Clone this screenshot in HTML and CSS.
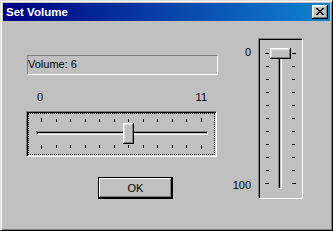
FILE: index.html
```html
<!DOCTYPE html>
<html lang="en">
<head>
  <meta charset="UTF-8" />
  <title>Set Volume</title>
  <link rel="stylesheet" href="styles.css">
</head>
<body>

  <div class="window">
    <div class="titlebar">
      <span class="title">Set Volume</span>
      <button class="close-btn" type="button" aria-label="Close">
        <svg width="8" height="7" viewBox="0 0 8 7">
          <path fill="#000" d="M0 0h2v1H0zM6 0h2v1H6zM1 1h2v1H1zM5 1h2v1H5zM2 2h4v1H2zM3 3h2v1H3zM2 4h4v1H2zM1 5h2v1H1zM5 5h2v1H5zM0 6h2v1H0zM6 6h2v1H6z"/>
        </svg>
      </button>
    </div>

    <div class="content">
      <!-- left: readout, horizontal slider, OK -->
      <div class="left-col">
        <div class="readout">Volume: 6</div>

        <div class="scale">
          <span>0</span>
          <span>11</span>
        </div>

        <div class="htrack">
          <div class="focus">
            <div class="hticks top">
              <i class="end"></i><i></i><i></i><i></i><i></i><i></i><i></i><i></i><i></i><i></i><i></i><i class="end"></i>
            </div>
            <div class="hchannel"></div>
            <div class="hticks bottom">
              <i class="end"></i><i></i><i></i><i></i><i></i><i></i><i></i><i></i><i></i><i></i><i></i><i class="end"></i>
            </div>
            <div class="hthumb" style="left: 94px"></div>
          </div>
        </div>

        <button class="btn default" type="button">OK</button>
      </div>

      <!-- right: vertical slider -->
      <div class="right-col">
        <div class="vlabels">
          <span>0</span>
          <span>100</span>
        </div>
        <div class="vtrack">
          <div class="vticks left">
            <i class="end"></i><i></i><i></i><i></i><i></i><i></i><i></i><i></i><i></i><i></i><i class="end"></i>
          </div>
          <div class="vchannel"></div>
          <div class="vticks right">
            <i class="end"></i><i></i><i></i><i></i><i></i><i></i><i></i><i></i><i></i><i></i><i class="end"></i>
          </div>
          <div class="vthumb" style="top: 9px"></div>
        </div>
      </div>
    </div>
  </div>

</body>
</html>
```

FILE: styles.css
```css
:root {
  --face: #c0c0c0;
  --light: #dfdfdf;
  --shadow: #808080;
  --dark: #000;
  --hilite: #fff;
}

* {
  margin: 0;
  padding: 0;
  box-sizing: border-box;
}

body {
  width: 333px;
  height: 231px;
  background: var(--face);
  font-family: "Liberation Sans", Arial, sans-serif;
  font-size: 11px;
  color: #000;
  overflow: hidden;
}

.window {
  width: 333px;
  height: 231px;
  background: var(--face);
  border-top: 1px solid var(--light);
  border-left: 1px solid var(--light);
  border-right: 1px solid var(--dark);
  border-bottom: 1px solid var(--dark);
  box-shadow: inset 1px 1px var(--hilite), inset -1px -1px var(--shadow);
  padding: 2px;
  display: flex;
  flex-direction: column;
}

/* title bar */
.titlebar {
  height: 18px;
  background: linear-gradient(to right, #000080, #1084d0);
  display: flex;
  align-items: center;
  justify-content: space-between;
  padding: 0 2px 0 3px;
}

.title {
  color: #fff;
  font-weight: bold;
  font-size: 11.5px;
  line-height: 13px;
}

.close-btn {
  width: 16px;
  height: 14px;
  border: none;
  background: var(--face);
  box-shadow: inset -1px -1px var(--dark), inset 1px 1px var(--hilite),
              inset -2px -2px var(--shadow), inset 2px 2px var(--light);
  display: flex;
  align-items: flex-start;
  justify-content: flex-start;
  padding: 3px 0 0 4px;
}

.close-btn svg {
  display: block;
}

/* body */
.content {
  flex: 1;
  display: flex;
  padding-left: 23px;
}

.left-col {
  width: 191px;
  display: flex;
  flex-direction: column;
}

.readout {
  margin: 34px 0 0 1px;
  width: 191px;
  height: 20px;
  border-top: 1px solid var(--shadow);
  border-left: 1px solid var(--shadow);
  border-right: 1px solid var(--hilite);
  border-bottom: 1px solid var(--hilite);
  line-height: 17px;
}

.scale {
  margin-top: 16px;
  display: flex;
  justify-content: space-between;
  padding: 0 10px 0 11px;
  line-height: 13px;
}

/* horizontal trackbar */
.htrack {
  margin-top: 7px;
  width: 191px;
  height: 46px;
  border-top: 1px solid var(--shadow);
  border-left: 1px solid var(--shadow);
  border-right: 1px solid var(--hilite);
  border-bottom: 1px solid var(--hilite);
  box-shadow: inset 1px 1px var(--dark), inset -1px -1px var(--light);
  padding: 1px;
}

.focus {
  position: relative;
  height: 100%;
  border: 1px dotted #000;
}

.hticks {
  display: flex;
  justify-content: space-between;
  width: 161px;
  height: 4px;
  margin-left: 12px;
}

.hticks i {
  width: 1px;
  height: 3px;
  background: #000;
}

.hticks i.end {
  height: 4px;
}

.hticks.top {
  margin-top: 4px;
  align-items: flex-end;
}

.hticks.bottom {
  margin-top: 10px;
  align-items: flex-start;
}

.hchannel {
  margin: 9px 0 0 7px;
  width: 172px;
  height: 4px;
  border-top: 1px solid var(--shadow);
  border-left: 1px solid var(--shadow);
  border-right: 1px solid var(--hilite);
  border-bottom: 1px solid var(--hilite);
  box-shadow: inset 1px 1px var(--dark);
}

.hthumb {
  position: absolute;
  top: 9px;
  width: 11px;
  height: 21px;
  background: var(--face);
  box-shadow: inset -1px -1px var(--dark), inset 1px 1px var(--hilite),
              inset -2px -2px var(--shadow), inset 2px 2px var(--light);
}

/* OK button */
.btn {
  margin: 20px 0 0 72px;
  width: 75px;
  height: 22px;
  background: var(--face);
  font-family: "Liberation Sans", Arial, sans-serif;
  font-size: 11px;
  color: #000;
  border: none;
  box-shadow: inset -1px -1px var(--dark), inset 1px 1px var(--hilite),
              inset -2px -2px var(--shadow), inset 2px 2px var(--light);
}

.btn.default {
  border: 1px solid #000;
  box-shadow: inset -1px -1px var(--dark), inset 1px 1px var(--hilite),
              inset -2px -2px var(--shadow);
}

/* vertical trackbar */
.right-col {
  margin: 17px 0 0 9px;
  display: flex;
  gap: 7px;
  align-items: flex-start;
}

.vlabels {
  width: 25px;
  height: 161px;
  padding: 8px 0 7px;
  display: flex;
  flex-direction: column;
  justify-content: space-between;
  align-items: flex-end;
  line-height: 13px;
}

.vtrack {
  position: relative;
  width: 45px;
  height: 161px;
  border-top: 1px solid var(--shadow);
  border-left: 1px solid var(--shadow);
  border-right: 1px solid var(--hilite);
  border-bottom: 1px solid var(--hilite);
  box-shadow: inset 1px 1px var(--dark);
  display: flex;
  align-items: flex-start;
  padding-left: 6px;
}

.vticks {
  margin-top: 14px;
  width: 4px;
  height: 131px;
  display: flex;
  flex-direction: column;
  justify-content: space-between;
}

.vticks i {
  width: 3px;
  height: 1px;
  background: #000;
}

.vticks i.end {
  width: 4px;
}

.vticks.left {
  align-items: flex-end;
}

.vticks.right {
  margin-left: 10px;
  align-items: flex-start;
}

.vchannel {
  margin: 9px 0 0 9px;
  width: 4px;
  height: 141px;
  border-top: 1px solid var(--shadow);
  border-left: 1px solid var(--shadow);
  border-right: 1px solid var(--hilite);
  border-bottom: 1px solid var(--hilite);
  box-shadow: inset 1px 1px var(--dark);
}

.vthumb {
  position: absolute;
  left: 11px;
  width: 21px;
  height: 11px;
  background: var(--face);
  box-shadow: inset -1px -1px var(--dark), inset 1px 1px var(--hilite),
              inset -2px -2px var(--shadow), inset 2px 2px var(--light);
}
```
